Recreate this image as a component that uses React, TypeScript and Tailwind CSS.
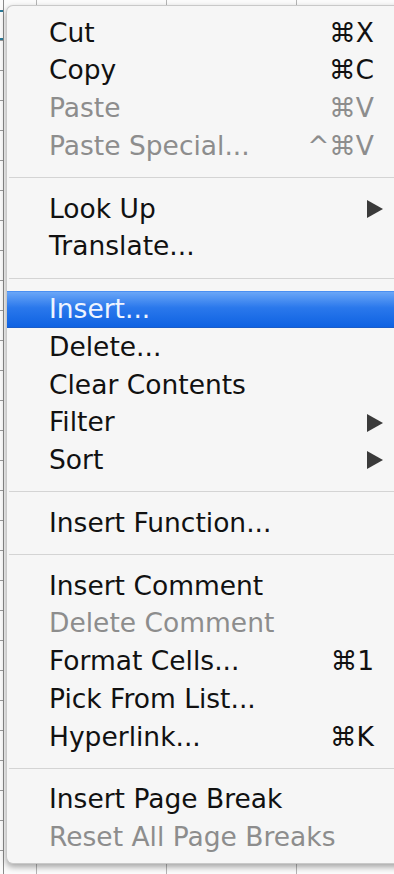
type Item = {
  label?: string;
  keys?: string;
  sub?: boolean;
  off?: boolean;
  active?: boolean;
  sep?: boolean;
};

const items: Item[] = [
  { label: "Cut", keys: "⌘X" },
  { label: "Copy", keys: "⌘C" },
  { label: "Paste", keys: "⌘V", off: true },
  { label: "Paste Special...", keys: "^⌘V", off: true },
  { sep: true },
  { label: "Look Up", sub: true },
  { label: "Translate..." },
  { sep: true },
  { label: "Insert...", active: true },
  { label: "Delete..." },
  { label: "Clear Contents" },
  { label: "Filter", sub: true },
  { label: "Sort", sub: true },
  { sep: true },
  { label: "Insert Function..." },
  { sep: true },
  { label: "Insert Comment" },
  { label: "Delete Comment", off: true },
  { label: "Format Cells...", keys: "⌘1" },
  { label: "Pick From List..." },
  { label: "Hyperlink...", keys: "⌘K" },
  { sep: true },
  { label: "Insert Page Break" },
  { label: "Reset All Page Breaks", off: true },
];

const Arrow = () => (
  <svg width="16" height="18" viewBox="0 0 16 18" className="shrink-0">
    <path d="M0 0 L16 9 L0 18 Z" fill="#3a3a3a" />
  </svg>
);

const Row = ({ item }: { item: Item }) => {
  if (item.sep) {
    return (
      <div className="flex h-[25px] items-center pl-[2px]">
        <div className="h-px w-full bg-[#d4d4d4]" />
      </div>
    );
  }
  const color = item.active
    ? "text-[#eef4ff]"
    : item.off
      ? "text-[#8d8d8d]"
      : "text-[#111111]";
  return (
    <div
      className={`flex h-[37.75px] items-center pl-[42px] pr-[23px] ${color} ${
        item.active
          ? "border-t border-b border-t-[#4a8ff2] border-b-[#1a5cc9] bg-[linear-gradient(#6aa6f7,#2a78ec_45%,#0f62e2)]"
          : ""
      }`}
    >
      <span className="flex-1 whitespace-nowrap">{item.label}</span>
      {item.keys && <span className="mr-[9px] whitespace-nowrap">{item.keys}</span>}
      {item.sub && <Arrow />}
    </div>
  );
};

export default function App() {
  return (
    <div className="relative h-[874px] w-[394px] overflow-hidden bg-[#fbfbfb] font-['DejaVu_Sans',sans-serif]">
      {/* spreadsheet behind the menu */}
      <div className="flex h-full">
        <div className="flex h-full w-[4px] flex-col border-r border-[#8a8a8a] bg-[repeating-linear-gradient(180deg,transparent_0_10px,#9a9a9a_10px_11px,transparent_11px_30px)]">
          <div className="mt-[10px] h-[30px] border-y-2 border-[#2a7a98]" />
        </div>
        <div className="h-full flex-1 bg-[repeating-linear-gradient(90deg,#b5b5b5_0_1px,transparent_1px_130px)] bg-[position:32px_0]" />
      </div>

      <div className="absolute left-[6px] top-[5px] w-[400px] rounded-l-[7px] border border-r-0 border-[#c9c9c9] bg-[#f6f6f6] pb-[7px] pt-[8px] text-[26.5px] leading-none shadow-[0_3px_6px_rgba(0,0,0,0.35)]">
        {items.map((it, i) => (
          <Row key={i} item={it} />
        ))}
      </div>
    </div>
  );
}
